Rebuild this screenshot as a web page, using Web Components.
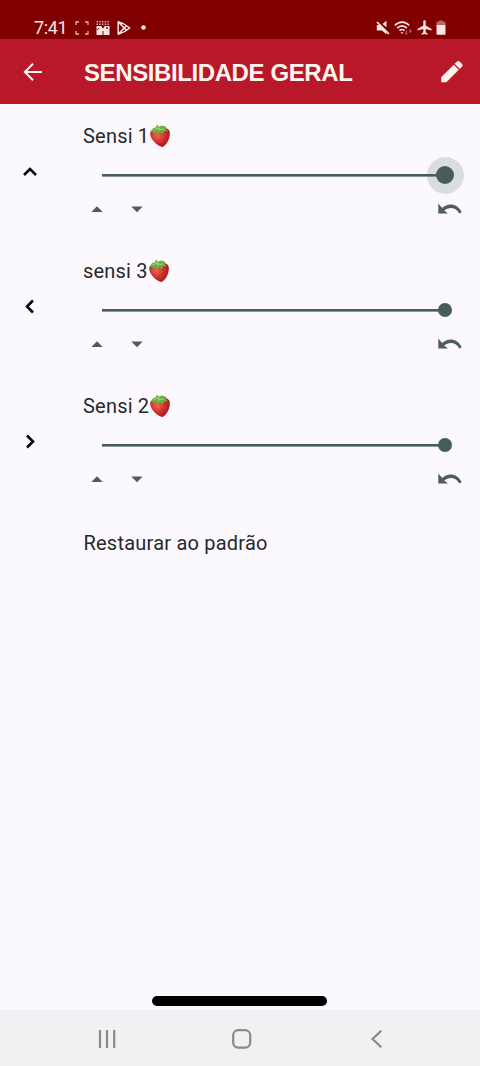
<!DOCTYPE html>
<html lang="pt-BR">
<head>
<meta charset="utf-8">
<meta name="viewport" content="width=device-width, initial-scale=1">
<title>Sensibilidade geral</title>
<style>
  body {
    margin: 0;
    background: #fbf9fd;
    font-family: Roboto, "Liberation Sans", sans-serif;
  }
</style>
</head>
<body>
<settings-screen>
  <status-bar slot="top" time="7:41"></status-bar>
  <app-bar slot="top">SENSIBILIDADE GERAL</app-bar>
  <sensi-row icon="up" active>Sensi 1</sensi-row>
  <sensi-row icon="left">sensi 3</sensi-row>
  <sensi-row icon="right">Sensi 2</sensi-row>
  <reset-item>Restaurar ao padrão</reset-item>
  <nav-bar slot="bottom"></nav-bar>
</settings-screen>

<script>
// name: [width, height, markup], drawn in css pixels
const icons = {
  capture: [14, 14, '<path d="M1 4V1h3M10 1h3v3M13 10v3h-3M4 13H1v-3" fill="none" stroke="#f0a9ac" stroke-width="1.300"/>'],
  gallery: [14, 14, '<path d="M.5 5h13v9H.5z"/><path d="M.5 .8h13M.5 3.300h13" fill="none" stroke="currentColor" stroke-width="1.500" stroke-dasharray="1.500 1.200" opacity=".75"/><path d="M5 4.500L7 8l2-3.500z" fill="#800000"/><path d="M1 9L3.200 7M7 14v-4" fill="none" stroke="#800000" stroke-width="1"/><path d="M7 7v3" stroke="currentColor" stroke-width="1"/><circle cx="11" cy="7" r=".9" fill="#800000"/>'],
  play: [14, 16, '<path d="M1.200 1.800v12.400c3-.8 8.500-3.500 11.500-6.200C9.500 5.200 4 2.500 1.200 1.800zM1.200 2l8.300 8.300M1.200 14l8.300-8.300" fill="none" stroke="currentColor" stroke-width="1.500" stroke-linejoin="round"/>'],
  dot: [5, 5, '<circle cx="2.500" cy="2.500" r="2.300"/>'],
  mute: [14, 15, '<path d="M.8 5h3.500L10.500 11v3.500L6 10.500H.8zM10.500 .8v6.500L6.500 4z"/><path d="M2 1l11.500 12" stroke="#800000" stroke-width="1.500"/><path d="M1 2l12 12" stroke="currentColor" stroke-width="1.700"/>'],
  wifi: [19, 14, '<g fill="none" stroke="currentColor" stroke-width="1.700"><path d="M.8 4.500c4.200-4.500 10.200-4.500 14.400 0M3.200 7.200c2.800-3 6.800-3 9.600 0M5.500 9.700c1.500-1.600 3.500-1.600 5 0"/></g><path d="M6.500 11.200h3L8 13z"/><path d="M12.500 9.500v4M11 12l1.500 1.500M16 12V9l1.500 1.500" fill="none" stroke="#b84f62" stroke-width="1.300"/>'],
  plane: [15, 15, '<path d="M6.300 1.500c0-1.700 2.400-1.700 2.400 0v4L14.500 9v1.500L8.700 9v3.300l1.800 1.200v1.200l-3-.8-3 .8v-1.200l1.800-1.200V9L.5 10.500V9l5.800-3.500z"/>'],
  battery: [10, 15, '<path d="M3 .5h4v1.300h2.500V5.500h-9V1.800H3z" opacity=".45"/><path d="M.5 5h9v9a.8.800 0 0 1-.8.800H1.300a.8.800 0 0 1-.8-.8z"/>'],
  back: [24, 24, '<path d="M22 12H4.500M13 3.800L4.800 12l8.200 8.200" fill="none" stroke="currentColor" stroke-width="2"/>'],
  pencil: [26, 26, '<path d="M2.500 23v-4.800L14.700 6l4.800 4.800L7.300 23zM16 4.800l1.900-1.900a2 2 0 0 1 2.800 0l2 2a2 2 0 0 1 0 2.800l-1.900 1.900z" stroke="currentColor" stroke-width=".6"/>'],
  up: [16, 16, '<path d="M2 11l6-6 6 6" fill="none" stroke="currentColor" stroke-width="2.600"/>'],
  left: [16, 16, '<path d="M11 1.500L5 7.500l6 6" fill="none" stroke="currentColor" stroke-width="2.600"/>'],
  right: [16, 16, '<path d="M5 1.500l6 6-6 6" fill="none" stroke="currentColor" stroke-width="2.600"/>'],
  more: [12, 6, '<path d="M.3 6L6 .2 11.700 6z"/>'],
  less: [12, 6, '<path d="M.3 .5L6 6.300 11.700 .5z"/>'],
  undo: [24, 12, '<path d="M.3 .5v10H10L6.200 7.600C10.500 3.700 18 4 21.200 10.600L23.700 9.300C20 .5 10-.8 4.200 5z"/>'],
  berry: [22, 24, `
    <defs><radialGradient id="g" cx=".38" cy=".4" r=".75">
      <stop offset="0" stop-color="#f0645a"/><stop offset=".45" stop-color="#d32f2b"/><stop offset="1" stop-color="#971216"/>
    </radialGradient></defs>
    <path d="M1.200 10C1 6 4.500 4.500 9 5.500c4-2 10-2.500 11.500 1.500C22 13 18 21 13.500 23 9 22.500 1.500 16 1.200 10z" fill="url(#g)"/>
    <path d="M1.800 8L4 4.200 7 3.300 8 .5l2 2.300L13 1.500l4.500 1.500-1 1.500 2.500 2.700-4 .3-1 2.800-3-1.800-2.500 2-1.500-2-3 1.500 .3-2z" fill="#6bab42"/>
    <path d="M4.500 6l4.500-2 3 1.500 3-.5M9 3l1 4" fill="none" stroke="#a9d778" stroke-width="1"/>
    <path d="M5 12.500l.4.800M9 13l.4.800M14 12l.3.800M8 17l.4.800M12.500 17.500l.3.800M17 10l.2.800" stroke="#ee8d68" stroke-width=".7" opacity=".6"/>`],
  recents: [20, 20, '<path d="M3 1v18M10 1v18M17.200 1v18" stroke="currentColor" stroke-width="2.200"/>'],
  home: [20, 20, '<rect x="1.200" y="1.200" width="17" height="17.400" rx="5" fill="none" stroke="currentColor" stroke-width="2.200"/>'],
  previous: [12, 20, '<path d="M10.300 1.800L1.500 10l8.800 8.200" fill="none" stroke="currentColor" stroke-width="2.200"/>'],
}

class SvgIcon extends HTMLElement {
  constructor() {
    super()
    this.attachShadow({ mode: 'open' })
  }

  connectedCallback() {
    const [width, height, markup] = icons[this.getAttribute('name')]
    this.shadowRoot.innerHTML = `
      <style>
        :host { display: block; flex: none; }
        svg { display: block; overflow: visible; }
      </style>
      <svg width="${width}" height="${height}" viewBox="0 0 ${width} ${height}" fill="currentColor">${markup}</svg>`
  }
}

customElements.define('svg-icon', SvgIcon)

class StatusBar extends HTMLElement {
  constructor() {
    super()
    this.attachShadow({ mode: 'open' }).innerHTML = `
      <style>
        :host {
          display: flex;
          justify-content: space-between;
          box-sizing: border-box;
          height: 39px;
          padding: 16px 34px 0 34px;
          background: #800000;
          color: #fbe6e3;
        }
        div { display: flex; align-items: center; height: 23px; }
        .time { width: 41px; font-size: 18px; line-height: 23px; letter-spacing: -.4px; }
        .left { gap: 7px; }
        .left .time { margin-right: -7px; }
        .left svg-icon[name=dot] { margin-left: 3px; }
        .right { gap: 4px; }
      </style>
      <div class="left">
        <span class="time">${this.getAttribute('time')}</span>
        <svg-icon name="capture"></svg-icon>
        <svg-icon name="gallery"></svg-icon>
        <svg-icon name="play"></svg-icon>
        <svg-icon name="dot"></svg-icon>
      </div>
      <div class="right">
        <svg-icon name="mute"></svg-icon>
        <svg-icon name="wifi"></svg-icon>
        <svg-icon name="plane"></svg-icon>
        <svg-icon name="battery"></svg-icon>
      </div>`
  }
}

customElements.define('status-bar', StatusBar)

class AppBar extends HTMLElement {
  constructor() {
    super()
    this.attachShadow({ mode: 'open' }).innerHTML = `
      <style>
        :host {
          display: flex;
          align-items: center;
          box-sizing: border-box;
          height: 65px;
          padding: 0 15px 0 20px;
          background: #b9172a;
          color: #fff5ef;
        }
        h1 {
          flex: 1;
          margin: 2px 0 0 40px;
          font: bold 24px/30px "Liberation Sans", sans-serif;
          letter-spacing: -.4px;
          white-space: nowrap;
        }
      </style>
      <svg-icon name="back"></svg-icon>
      <h1><slot></slot></h1>
      <svg-icon name="pencil"></svg-icon>`
  }
}

customElements.define('app-bar', AppBar)

class SensiSlider extends HTMLElement {
  constructor() {
    super()
    this.attachShadow({ mode: 'open' }).innerHTML = `
      <style>
        :host { display: flex; align-items: center; height: 38px; color: #465c5d; }
        .track { flex: 1; height: 2px; border-bottom: 1px solid #8b999b; background: currentColor; background-clip: padding-box; }
        .halo {
          display: flex;
          align-items: center;
          justify-content: center;
          width: 37px;
          height: 37px;
          margin-left: -19px;
          border-radius: 50%;
        }
        .thumb { width: 14px; height: 14px; border-radius: 50%; background: currentColor; }
        :host([active]) .halo { background: rgba(70, 92, 93, .18); }
        :host([active]) .thumb { width: 18px; height: 18px; }
      </style>
      <div class="track"></div>
      <div class="halo"><div class="thumb"></div></div>`
  }
}

customElements.define('sensi-slider', SensiSlider)

class SensiRow extends HTMLElement {
  constructor() {
    super()
    const active = this.hasAttribute('active') ? 'active' : ''
    this.attachShadow({ mode: 'open' }).innerHTML = `
      <style>
        :host { display: flex; height: 135px; }
        .side { display: flex; align-items: center; width: 61px; padding-left: 22px; color: #080808; }
        .main { flex: 1; padding: 20px 16px 0 0; }
        .title {
          display: flex;
          align-items: center;
          height: 24px;
          font-size: 20px;
          letter-spacing: .2px;
          color: #29282c;
        }
        sensi-slider { margin: 8px .5px 0 18.500px; }
        .buttons {
          display: flex;
          align-items: center;
          height: 12px;
          margin: 9px 2px 0 8px;
          color: #505d5e;
        }
        svg-icon[name=less] { margin-left: 27.500px; }
        svg-icon[name=undo] { margin-left: auto; }
      </style>
      <div class="side"><svg-icon name="${this.getAttribute('icon')}"></svg-icon></div>
      <div class="main">
        <div class="title"><slot></slot><svg-icon name="berry"></svg-icon></div>
        <sensi-slider ${active}></sensi-slider>
        <div class="buttons">
          <svg-icon name="more"></svg-icon>
          <svg-icon name="less"></svg-icon>
          <svg-icon name="undo"></svg-icon>
        </div>
      </div>`
  }
}

customElements.define('sensi-row', SensiRow)

class ResetItem extends HTMLElement {
  constructor() {
    super()
    this.attachShadow({ mode: 'open' }).innerHTML = `
      <style>
        :host {
          display: block;
          padding: 22px 16px 0 83.500px;
          font-size: 20px;
          line-height: 24px;
          letter-spacing: .22px;
          color: #29282c;
        }
      </style>
      <slot></slot>`
  }
}

customElements.define('reset-item', ResetItem)

class NavBar extends HTMLElement {
  constructor() {
    super()
    this.attachShadow({ mode: 'open' }).innerHTML = `
      <style>
        :host { display: block; }
        .gesture { width: 175px; height: 10px; margin: 0 0 4px 152px; border-radius: 5px; background: #000; }
        .keys {
          display: flex;
          align-items: center;
          box-sizing: border-box;
          height: 56px;
          padding: 2px 97px 0 97px;
          background: #f2f0f3;
          color: #8b898c;
        }
        svg-icon[name=home] { margin: 0 auto 0 115px; }
      </style>
      <div class="gesture"></div>
      <div class="keys">
        <svg-icon name="recents"></svg-icon>
        <svg-icon name="home"></svg-icon>
        <svg-icon name="previous"></svg-icon>
      </div>`
  }
}

customElements.define('nav-bar', NavBar)

class SettingsScreen extends HTMLElement {
  constructor() {
    super()
    this.attachShadow({ mode: 'open' }).innerHTML = `
      <style>
        :host { display: flex; flex-direction: column; height: 1066px; }
        main { flex: 1; }
      </style>
      <slot name="top"></slot>
      <main><slot></slot></main>
      <slot name="bottom"></slot>`
  }
}

customElements.define('settings-screen', SettingsScreen)
</script>
</body>
</html>
